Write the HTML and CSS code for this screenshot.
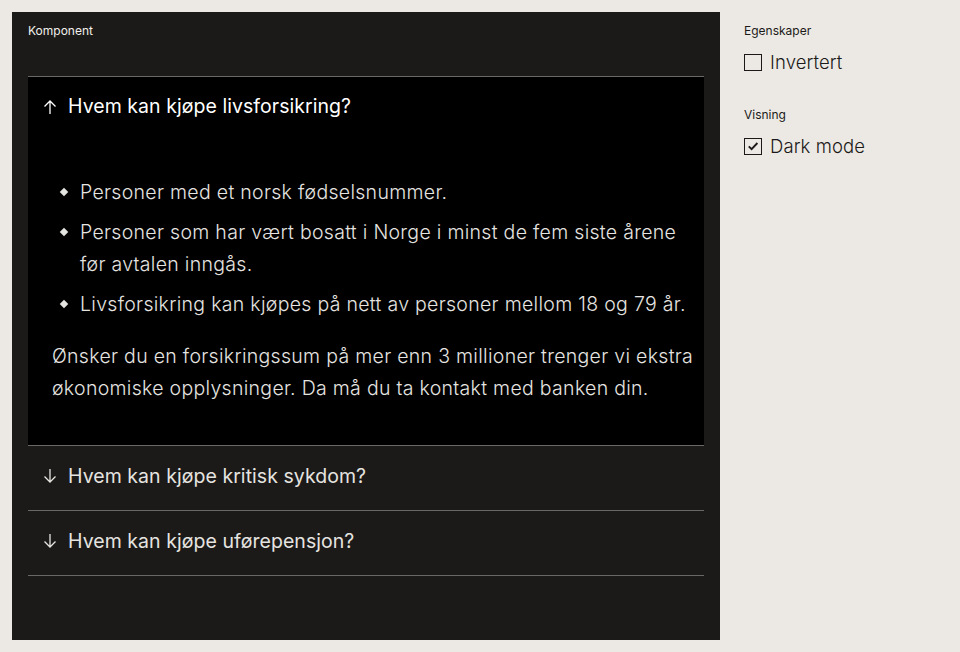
FILE: index.html
```html
<!DOCTYPE html>
<html lang="no">
<head>
<meta charset="utf-8">
<link rel="stylesheet" href="styles.css">
</head>
<body>
<div class="page">
  <main class="stage">
    <div class="stage-label">Komponent</div>
    <div class="accordion">
      <section class="item open">
        <div class="head">
          <svg class="arrow" viewBox="0 0 16 16" width="16" height="16"><path d="M8 15V2M2.5 7.5L8 2l5.5 5.5" fill="none" stroke="currentColor" stroke-width="1.3"/></svg>
          <span>Hvem kan kjøpe livsforsikring?</span>
        </div>
        <div class="body">
          <ul class="list">
            <li>Personer med et norsk fødselsnummer.</li>
            <li>Personer som har vært bosatt i Norge i minst de fem siste årene før avtalen inngås.</li>
            <li>Livsforsikring kan kjøpes på nett av personer mellom 18 og 79 år.</li>
          </ul>
          <p class="para">Ønsker du en forsikringssum på mer enn 3 millioner trenger vi ekstra økonomiske opplysninger. Da må du ta kontakt med banken din.</p>
        </div>
      </section>
      <section class="item">
        <div class="head">
          <svg class="arrow" viewBox="0 0 16 16" width="16" height="16"><path d="M8 1v13M2.5 8.5L8 14l5.5-5.5" fill="none" stroke="currentColor" stroke-width="1.3"/></svg>
          <span>Hvem kan kjøpe kritisk sykdom?</span>
        </div>
      </section>
      <section class="item">
        <div class="head">
          <svg class="arrow" viewBox="0 0 16 16" width="16" height="16"><path d="M8 1v13M2.5 8.5L8 14l5.5-5.5" fill="none" stroke="currentColor" stroke-width="1.3"/></svg>
          <span>Hvem kan kjøpe uførepensjon?</span>
        </div>
      </section>
    </div>
  </main>
  <aside class="side">
    <div class="group">
      <div class="group-label">Egenskaper</div>
      <label class="check"><span class="box"></span><span>Invertert</span></label>
    </div>
    <div class="group">
      <div class="group-label">Visning</div>
      <label class="check"><span class="box checked"><svg viewBox="0 0 12 12" width="12" height="12"><path d="M1.8 6.4l2.8 2.8L10.4 3" fill="none" stroke="currentColor" stroke-width="1.9"/></svg></span><span>Dark mode</span></label>
    </div>
  </aside>
</div>
</body>
</html>
```

FILE: styles.css
```css
* { box-sizing: border-box; }
html, body { margin: 0; padding: 0; }
body {
  background: #ece9e4;
  font-family: Inter, "Noto Sans", sans-serif;
  color: #1b1a18;
}
.page {
  display: flex;
  gap: 24px;
  padding: 12px;
  height: 652px;
}
.stage {
  width: 708px;
  height: 628px;
  background: #1b1a18;
  padding: 12px 16px;
  color: #e6e4e0;
}
.stage-label {
  font-size: 12px;
  line-height: 14px;
  color: #f2f0ec;
  letter-spacing: 0;
}
.accordion {
  margin-top: 38px;
  border-top: 1px solid #6a6866;
}
.item {
  border-bottom: 1px solid #6a6866;
}
.item.open {
  background: #000;
}
.head {
  display: flex;
  align-items: center;
  gap: 10px;
  height: 64px;
  padding: 0 14px 5px;
  font-size: 19.5px;
  font-weight: 400;
  letter-spacing: 0.05px;
  color: #e6e4e0;
}
.item.open .head {
  color: #fff;
  height: 62px;
  padding-bottom: 2px;
  align-items: flex-start;
  padding-top: 17px;
}
.arrow { flex: none; }
.item.open .arrow { margin-top: 5px; }
.body {
  padding: 37px 4px 41px 24px;
  font-weight: 300;
  font-size: 19.5px;
  line-height: 32px;
  letter-spacing: 0.3px;
  color: #e6e4e0;
}
.list {
  list-style: none;
  margin: 0 0 20px 0;
  padding: 0 0 0 28px;
}
.list li {
  position: relative;
  margin-bottom: 8px;
}
.list li::before {
  content: "";
  position: absolute;
  left: -19px;
  top: 13px;
  width: 6px;
  height: 6px;
  background: #e6e4e0;
  transform: rotate(45deg);
}
.para { margin: 0; }
.side {
  display: flex;
  flex-direction: column;
  gap: 34px;
  padding-top: 12px;
}
.group-label {
  font-size: 12px;
  line-height: 14px;
  color: #1b1a18;
}
.check {
  display: flex;
  align-items: center;
  gap: 8px;
  margin-top: 12px;
  font-size: 18.5px;
  font-weight: 300;
  letter-spacing: 0.1px;
  line-height: 24px;
  color: #1b1a18;
}
.box {
  width: 18px;
  height: 17px;
  border: 1.3px solid #1b1a18;
  display: flex;
  align-items: center;
  justify-content: center;
  flex: none;
}
```
